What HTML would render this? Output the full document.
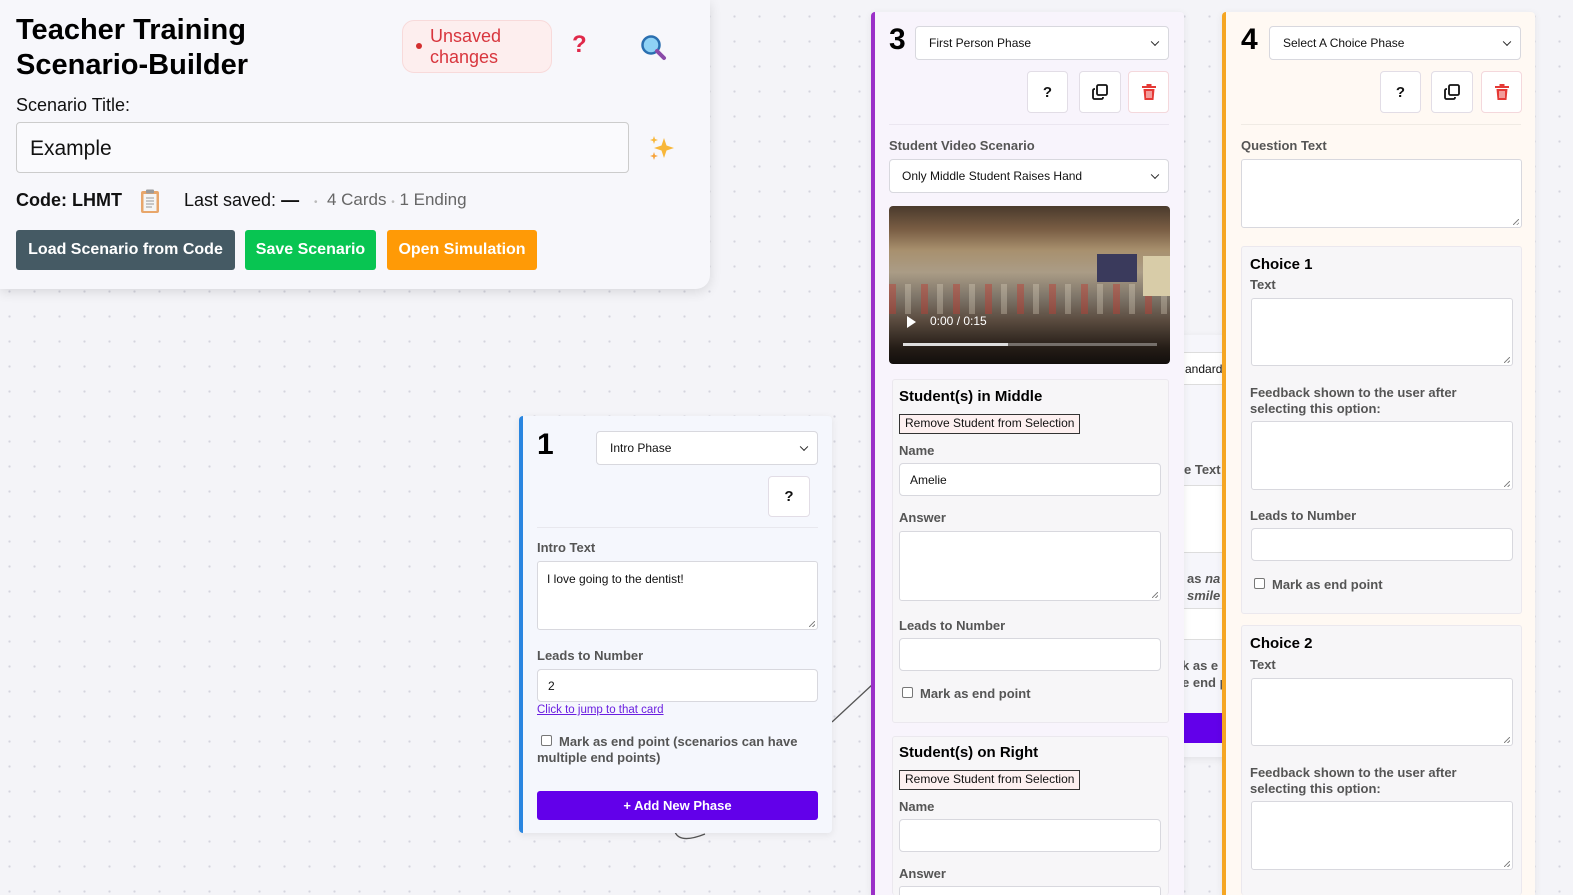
<!DOCTYPE html>
<html><head><meta charset="utf-8">
<style>
*{box-sizing:border-box;margin:0;padding:0}
html{width:1573px;height:895px;overflow:hidden}
body{width:1573px;height:895px;overflow:hidden;position:relative;font-family:"Liberation Sans",sans-serif;background-color:#f4f4f8;background-image:radial-gradient(circle,#d4d4de 1px,transparent 1.3px);background-size:25px 25px;background-position:-3px 4px;color:#111}
.a{position:absolute}
.card{position:absolute;box-shadow:0 2px 8px rgba(0,0,0,.08);border-radius:4px}
.inp{position:absolute;background:#fff;border:1px solid #d8d8de;border-radius:4px;font-size:12px;color:#111;padding-left:10px;display:flex;align-items:center}
.ta{position:absolute;background:#fff;border:1px solid #d8d8de;border-radius:3px}
.ta:after{content:"";position:absolute;right:2px;bottom:2px;width:6px;height:6px;background:linear-gradient(135deg,transparent 45%,#888 45%,#888 55%,transparent 55%,transparent 75%,#888 75%,#888 85%,transparent 85%)}
.sel:after{content:"";position:absolute;right:10px;top:50%;width:5px;height:5px;border-right:1.6px solid #222;border-bottom:1.6px solid #222;transform:translateY(-70%) rotate(45deg)}
.lbl{position:absolute;font-size:13px;font-weight:bold;color:#555}
.btn{position:absolute;background:#fff;border:1px solid #e2dde6;border-radius:4px;display:flex;align-items:center;justify-content:center;font-size:15px;font-weight:bold}
.box{position:absolute;background:#f7f6f8;border:1px solid #ebe8ee;border-radius:3px}
.h{position:absolute;font-size:15px;font-weight:bold;color:#000}
.rm{position:absolute;background:#fdf0f0;border:1.5px solid #333;font-size:12px;padding:0 5px;height:20px;line-height:17px;color:#111}
.cb{position:absolute;width:11px;height:11px;border:1px solid #777;border-radius:2px;background:#fff}
.num{position:absolute;font-size:30px;font-weight:bold;color:#000}
</style></head><body>

<!-- top panel -->
<div class="a" style="left:0;top:0;width:710px;height:289px;background:#f7f7fb;border-radius:0 0 14px 0;box-shadow:0 3px 12px rgba(0,0,0,.12)"></div>
<div class="a" style="left:16px;top:13px;font-size:29px;font-weight:bold;line-height:35px;color:#000">Teacher Training<br>Scenario-Builder</div>
<div class="a" style="left:402px;top:20px;width:150px;height:53px;background:#fdeeee;border:1px solid #f8dada;border-radius:12px"></div>
<div class="a" style="left:416px;top:43px;width:6px;height:6px;border-radius:50%;background:#d32f2f"></div>
<div class="a" style="left:430px;top:26px;font-size:18px;line-height:21px;color:#d8363e">Unsaved<br>changes</div>
<div class="a" style="left:572px;top:31px;font-size:24px;font-weight:bold;color:#e0294a">?</div>
<svg class="a" style="left:640px;top:34px" width="28" height="28" viewBox="0 0 28 28"><circle cx="11" cy="11" r="8.5" fill="#8fd2f5" stroke="#2a6fb0" stroke-width="2.5"/><path d="M17 17l7 7" stroke="#8a4aa8" stroke-width="4" stroke-linecap="round"/></svg>
<div class="a" style="left:16px;top:95px;font-size:18px;color:#111">Scenario Title:</div>
<div class="a" style="left:16px;top:122px;width:613px;height:51px;background:#fafafd;border:1px solid #ccc;border-radius:4px;font-size:21px;padding:14px 0 0 13px">Example</div>
<svg class="a" style="left:648px;top:134px" width="28" height="28" viewBox="0 0 28 28"><path d="M16 4l2.5 7.5L26 14l-7.5 2.5L16 24l-2.5-7.5L6 14l7.5-2.5z" fill="#f8b739"/><path d="M6 2l1 3 3 1-3 1-1 3-1-3-3-1 3-1z" fill="#f8b739"/><path d="M6 18l1 3 3 1-3 1-1 3-1-3-3-1 3-1z" fill="#f7a33a"/></svg>
<div class="a" style="left:16px;top:190px;font-size:18px;font-weight:bold;color:#111">Code: LHMT</div>
<svg class="a" style="left:139px;top:188px" width="22" height="26" viewBox="0 0 22 26"><rect x="2" y="3" width="18" height="22" rx="2" fill="#e8a66a"/><rect x="4.5" y="6" width="13" height="17" fill="#f5f5f5"/><rect x="7" y="1.5" width="8" height="4" rx="1" fill="#9b9b9b"/><path d="M7 10h8M7 13h8M7 16h8M7 19h6" stroke="#999" stroke-width="1"/></svg>
<div class="a" style="left:184px;top:190px;font-size:18px;color:#111">Last saved: <b>—</b></div>
<div class="a" style="left:314px;top:190px;font-size:17px;color:#666"><span style="font-size:10px;color:#bbb">•</span>&nbsp; 4 Cards <span style="font-size:10px;color:#bbb">•</span> 1 Ending</div>
<div class="a" style="left:16px;top:230px;width:219px;height:40px;background:#455a64;border-radius:3px;color:#fff;font-weight:bold;font-size:16px;display:flex;align-items:center;justify-content:center">Load Scenario from Code</div>
<div class="a" style="left:245px;top:230px;width:131px;height:40px;background:#08c552;border-radius:3px;color:#fff;font-weight:bold;font-size:16px;display:flex;align-items:center;justify-content:center">Save Scenario</div>
<div class="a" style="left:387px;top:230px;width:150px;height:40px;background:#ff9a06;border-radius:3px;color:#fff;font-weight:bold;font-size:16px;display:flex;align-items:center;justify-content:center">Open Simulation</div>

<!-- connectors -->
<svg class="a" style="left:660px;top:670px" width="220" height="180"><path d="M172 52L213 14" stroke="#555" stroke-width="1.3" fill="none"/><path d="M15 162q5 12 30 2" stroke="#555" stroke-width="1.3" fill="none"/></svg>

<!-- card 2 (behind) -->
<div class="card" style="left:1150px;top:335px;width:90px;height:422px;background:#f6f6fb"></div>
<div class="a" style="left:1150px;top:352px;width:80px;height:33px;background:#fff;border:1px solid #ddd;font-size:12px;padding:9px 0 0 34px">andard</div>
<div class="lbl" style="left:1184px;top:462px">e Text</div>
<div class="a" style="left:1150px;top:485px;width:80px;height:68px;background:#fff;border:1px solid #ddd"></div>
<div class="a" style="left:1187px;top:570px;font-size:13px;font-weight:bold;color:#555;line-height:17px">as <i>na</i><br><i>smile</i></div>
<div class="a" style="left:1150px;top:608px;width:80px;height:32px;background:#fff;border:1px solid #ddd"></div>
<div class="a" style="left:1182px;top:657px;font-size:13px;font-weight:bold;color:#555;line-height:17px">k as e<br>e end p</div>
<div class="a" style="left:1150px;top:713px;width:80px;height:30px;background:#6200ea"></div>

<!-- card 1 -->
<div class="card" style="left:519px;top:416px;width:313px;height:417px;background:#f5f7fd;border-left:4px solid #2a86e0"></div>
<div class="num" style="left:537px;top:428px">1</div>
<div class="inp sel" style="left:596px;top:431px;width:222px;height:34px;padding-left:13px">Intro Phase</div>
<div class="btn" style="left:768px;top:476px;width:42px;height:41px">?</div>
<div class="a" style="left:537px;top:527px;width:281px;height:1px;background:#e8e8ee"></div>
<div class="lbl" style="left:537px;top:540px">Intro Text</div>
<div class="ta" style="left:537px;top:561px;width:281px;height:69px;font-size:12px;padding:10px 0 0 9px">I love going to the dentist!</div>
<div class="lbl" style="left:537px;top:648px">Leads to Number</div>
<div class="inp" style="left:537px;top:669px;width:281px;height:33px">2</div>
<div class="a" style="left:537px;top:704px;font-size:11.5px;color:#6a1ee0;text-decoration:underline">Click to jump to that card</div>
<div class="cb" style="left:541px;top:735px"></div>
<div class="a" style="left:537px;top:734px;width:280px;font-size:13px;font-weight:bold;color:#555;line-height:16px;text-indent:22px">Mark as end point (scenarios can have multiple end points)</div>
<div class="a" style="left:537px;top:791px;width:281px;height:29px;background:#6200ea;border-radius:3px;color:#fff;font-weight:bold;font-size:13px;display:flex;align-items:center;justify-content:center">+ Add New Phase</div>

<!-- card 3 -->
<div class="card" style="left:871px;top:12px;width:313px;height:883px;background:#f8f4fc;border-left:4px solid #9b30c8;border-radius:4px 4px 0 0"></div>
<div class="num" style="left:889px;top:23px">3</div>
<div class="inp sel" style="left:915px;top:26px;width:254px;height:34px;padding-left:13px">First Person Phase</div>
<div class="btn" style="left:1027px;top:71px;width:41px;height:42px">?</div>
<div class="btn" style="left:1079px;top:71px;width:42px;height:42px"><svg width="18" height="18" viewBox="0 0 18 18"><rect x="6" y="2" width="10" height="10" rx="1.5" fill="none" stroke="#111" stroke-width="1.8"/><path d="M4 6H3.5A1.5 1.5 0 0 0 2 7.5v7A1.5 1.5 0 0 0 3.5 16h7a1.5 1.5 0 0 0 1.5-1.5V14" fill="none" stroke="#111" stroke-width="1.8"/></svg></div>
<div class="btn" style="left:1128px;top:71px;width:41px;height:42px;border-color:#f4d8dc"><svg width="16" height="18" viewBox="0 0 16 18"><rect x="1" y="3" width="14" height="2" fill="#e53935"/><rect x="5.5" y="1" width="5" height="2" fill="#e53935"/><path d="M2.5 6h11l-1 11h-9z" fill="#e53935"/><path d="M6 8v7M8 8v7M10 8v7" stroke="#fff" stroke-width="1"/></svg></div>
<div class="a" style="left:889px;top:124px;width:280px;height:1px;background:#ebe6f0"></div>
<div class="lbl" style="left:889px;top:138px">Student Video Scenario</div>
<div class="inp sel" style="left:889px;top:159px;width:280px;height:34px;padding-left:12px">Only Middle Student Raises Hand</div>
<div class="a" style="left:889px;top:206px;width:281px;height:158px;border-radius:4px;overflow:hidden;background:linear-gradient(180deg,#4a3a2c 0%,#7a5e44 15%,#a8906e 28%,#aa9c86 42%,#7d7468 58%,#5b4c40 72%,#241c16 90%,#120e0c 100%)">
 <div class="a" style="left:0;top:78px;width:281px;height:30px;background:repeating-linear-gradient(90deg,rgba(190,60,50,.45) 0 7px,transparent 7px 16px,rgba(230,220,200,.3) 16px 22px,transparent 22px 32px)"></div>
 <div class="a" style="left:208px;top:48px;width:40px;height:28px;background:#3a3a5c"></div>
 <div class="a" style="left:254px;top:50px;width:27px;height:40px;background:#d8cca8"></div>
 <div class="a" style="left:18px;top:110px;width:0;height:0;border-left:9px solid #fff;border-top:6px solid transparent;border-bottom:6px solid transparent"></div>
 <div class="a" style="left:41px;top:108px;font-size:12px;color:#fff">0:00 / 0:15</div>
 <div class="a" style="left:14px;top:137px;width:254px;height:3px;background:rgba(255,255,255,.35)"></div>
 <div class="a" style="left:14px;top:137px;width:105px;height:3px;background:#ddd"></div>
</div>
<div class="box" style="left:892px;top:379px;width:277px;height:344px"></div>
<div class="h" style="left:899px;top:388px">Student(s) in Middle</div>
<div class="rm" style="left:899px;top:414px">Remove Student from Selection</div>
<div class="lbl" style="left:899px;top:443px">Name</div>
<div class="inp" style="left:899px;top:463px;width:262px;height:33px">Amelie</div>
<div class="lbl" style="left:899px;top:510px">Answer</div>
<div class="ta" style="left:899px;top:531px;width:262px;height:70px"></div>
<div class="lbl" style="left:899px;top:618px">Leads to Number</div>
<div class="inp" style="left:899px;top:638px;width:262px;height:33px"></div>
<div class="cb" style="left:902px;top:687px"></div>
<div class="lbl" style="left:920px;top:686px">Mark as end point</div>
<div class="box" style="left:892px;top:736px;width:277px;height:159px;border-bottom:none"></div>
<div class="h" style="left:899px;top:744px">Student(s) on Right</div>
<div class="rm" style="left:899px;top:770px">Remove Student from Selection</div>
<div class="lbl" style="left:899px;top:799px">Name</div>
<div class="inp" style="left:899px;top:819px;width:262px;height:33px"></div>
<div class="lbl" style="left:899px;top:866px">Answer</div>
<div class="a" style="left:899px;top:886px;width:262px;height:9px;background:#fff;border:1px solid #d8d8de;border-bottom:none;border-radius:3px 3px 0 0"></div>

<!-- card 4 -->
<div class="card" style="left:1222px;top:12px;width:313px;height:883px;background:#fff9f3;border-left:4px solid #f5a623;border-radius:4px 4px 0 0"></div>
<div class="num" style="left:1241px;top:23px">4</div>
<div class="inp sel" style="left:1269px;top:26px;width:252px;height:34px;padding-left:13px">Select A Choice Phase</div>
<div class="btn" style="left:1380px;top:71px;width:41px;height:42px">?</div>
<div class="btn" style="left:1431px;top:71px;width:42px;height:42px"><svg width="18" height="18" viewBox="0 0 18 18"><rect x="6" y="2" width="10" height="10" rx="1.5" fill="none" stroke="#111" stroke-width="1.8"/><path d="M4 6H3.5A1.5 1.5 0 0 0 2 7.5v7A1.5 1.5 0 0 0 3.5 16h7a1.5 1.5 0 0 0 1.5-1.5V14" fill="none" stroke="#111" stroke-width="1.8"/></svg></div>
<div class="btn" style="left:1481px;top:71px;width:41px;height:42px;border-color:#f4d8dc"><svg width="16" height="18" viewBox="0 0 16 18"><rect x="1" y="3" width="14" height="2" fill="#e53935"/><rect x="5.5" y="1" width="5" height="2" fill="#e53935"/><path d="M2.5 6h11l-1 11h-9z" fill="#e53935"/><path d="M6 8v7M8 8v7M10 8v7" stroke="#fff" stroke-width="1"/></svg></div>
<div class="a" style="left:1241px;top:124px;width:280px;height:1px;background:#f0ebe4"></div>
<div class="lbl" style="left:1241px;top:138px">Question Text</div>
<div class="ta" style="left:1241px;top:159px;width:281px;height:69px"></div>
<div class="box" style="left:1241px;top:246px;width:281px;height:368px"></div>
<div class="h" style="left:1250px;top:256px">Choice 1</div>
<div class="lbl" style="left:1250px;top:277px">Text</div>
<div class="ta" style="left:1251px;top:298px;width:262px;height:68px"></div>
<div class="lbl" style="left:1250px;top:385px;line-height:16px">Feedback shown to the user after<br>selecting this option:</div>
<div class="ta" style="left:1251px;top:421px;width:262px;height:69px"></div>
<div class="lbl" style="left:1250px;top:508px">Leads to Number</div>
<div class="inp" style="left:1251px;top:528px;width:262px;height:33px"></div>
<div class="cb" style="left:1254px;top:578px"></div>
<div class="lbl" style="left:1272px;top:577px">Mark as end point</div>
<div class="box" style="left:1241px;top:625px;width:281px;height:270px;border-bottom:none"></div>
<div class="h" style="left:1250px;top:635px">Choice 2</div>
<div class="lbl" style="left:1250px;top:657px">Text</div>
<div class="ta" style="left:1251px;top:678px;width:262px;height:68px"></div>
<div class="lbl" style="left:1250px;top:765px;line-height:16px">Feedback shown to the user after<br>selecting this option:</div>
<div class="ta" style="left:1251px;top:801px;width:262px;height:69px"></div>
</body></html>
